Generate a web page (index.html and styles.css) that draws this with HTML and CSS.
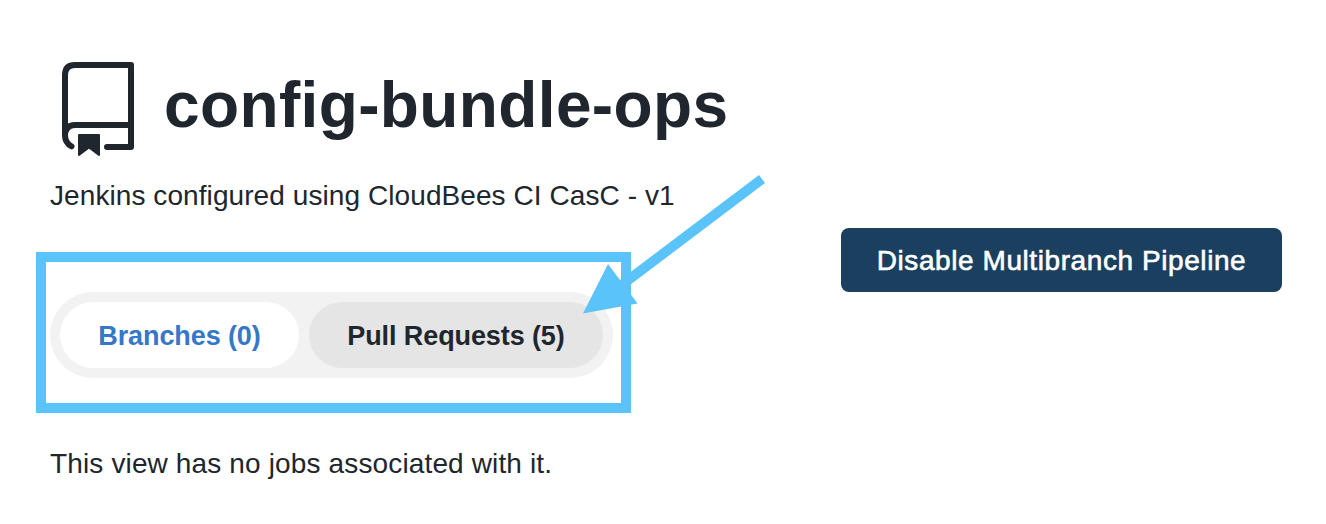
FILE: index.html
```html
<!DOCTYPE html>
<html lang="en">
<head>
<meta charset="utf-8">
<title>config-bundle-ops</title>
<link rel="stylesheet" href="styles.css">
</head>
<body>
<div class="page">
  <main class="main">
    <header class="heading">
      <svg class="repo-icon" viewBox="0 0 96 98" width="96" height="98" aria-hidden="true">
        <path class="repo-line" d="M21.5 86.3C17 84 15 80.5 15 75V15Q15 5 25 5H81V87H57M15 76Q15 65 25 65H81"/>
        <path class="repo-mark" d="M29 75H49V95L39 87.5L29 95Z"/>
      </svg>
      <h1 class="title"><span>config-bundle-ops</span></h1>
    </header>
    <p class="description"><span>Jenkins configured using CloudBees CI CasC - v1</span></p>
    <div class="highlight">
      <nav class="tabs">
        <a class="tab tab-active"><span>Branches (0)</span></a>
        <a class="tab tab-hover"><span>Pull Requests (5)</span></a>
      </nav>
    </div>
    <p class="empty"><span>This view has no jobs associated with it.</span></p>
  </main>
  <aside class="actions">
    <button class="disable-button" type="button"><span>Disable Multibranch Pipeline</span></button>
  </aside>
  <svg class="arrow" viewBox="0 0 190 150" width="190" height="150" aria-hidden="true">
    <path d="M179 0L185 8L46 113L57.5 128.5L3 138.5L28 89L40 105Z"/>
  </svg>
</div>
</body>
</html>
```
FILE: styles.css
```css
body {
  margin: 0;
  background: #fff;
  color: #20262d;
  font: 28px/40px "Liberation Sans", Arial, sans-serif;
}
.page {
  position: relative;
  display: flex;
  justify-content: space-between;
  box-sizing: border-box;
  height: 524px;
  padding: 57px 44px 0 50px;
  overflow: hidden;
}
.heading {
  display: flex;
  height: 100px;
}
.repo-icon {
  flex: none;
  margin: 3px 18px 0 0;
}
.repo-line {
  fill: none;
  stroke: #20262d;
  stroke-width: 6;
  stroke-linecap: round;
  stroke-linejoin: round;
}
.repo-mark {
  fill: #20262d;
  stroke: #20262d;
  stroke-width: 2;
  stroke-linejoin: round;
}
.title {
  margin: 8px 0 0;
  font-size: 64px;
  line-height: 80px;
  letter-spacing: 0.37px;
  white-space: nowrap;
}
.description {
  margin: 19px 0 0;
  letter-spacing: 0.08px;
  white-space: nowrap;
}
.highlight {
  box-sizing: border-box;
  width: 595px;
  height: 161px;
  margin: 36px 0 0 -14px;
  padding: 30px 4px;
  border: 10px solid #5ac4fa;
}
.tabs {
  display: flex;
  gap: 10px;
  box-sizing: border-box;
  width: 563px;
  height: 86px;
  padding: 10px;
  border-radius: 43px;
  background: #f2f2f2;
}
.tab {
  display: flex;
  align-items: center;
  justify-content: center;
  box-sizing: border-box;
  padding-top: 2px;
  border-radius: 33px;
  font-size: 27px;
  font-weight: 700;
  letter-spacing: -0.1px;
  white-space: nowrap;
}
.tab-active {
  width: 239px;
  background: #fff;
  color: #3577c8;
}
.tab-hover {
  width: 294px;
  background: #e5e5e5;
}
.empty {
  margin: 31px 0 0;
  letter-spacing: 0.14px;
}
.actions {
  padding-top: 171px;
}
.disable-button {
  width: 441px;
  height: 64px;
  padding: 2px 0 0;
  border: 0;
  border-radius: 8px;
  background: #1b3f5e;
  color: #fff;
  font: inherit;
  letter-spacing: 0.58px;
  white-space: nowrap;
  -webkit-text-stroke: 0.6px #fff;
}
.arrow {
  position: absolute;
  left: 580px;
  top: 175px;
  fill: #5ac4fa;
}
```
